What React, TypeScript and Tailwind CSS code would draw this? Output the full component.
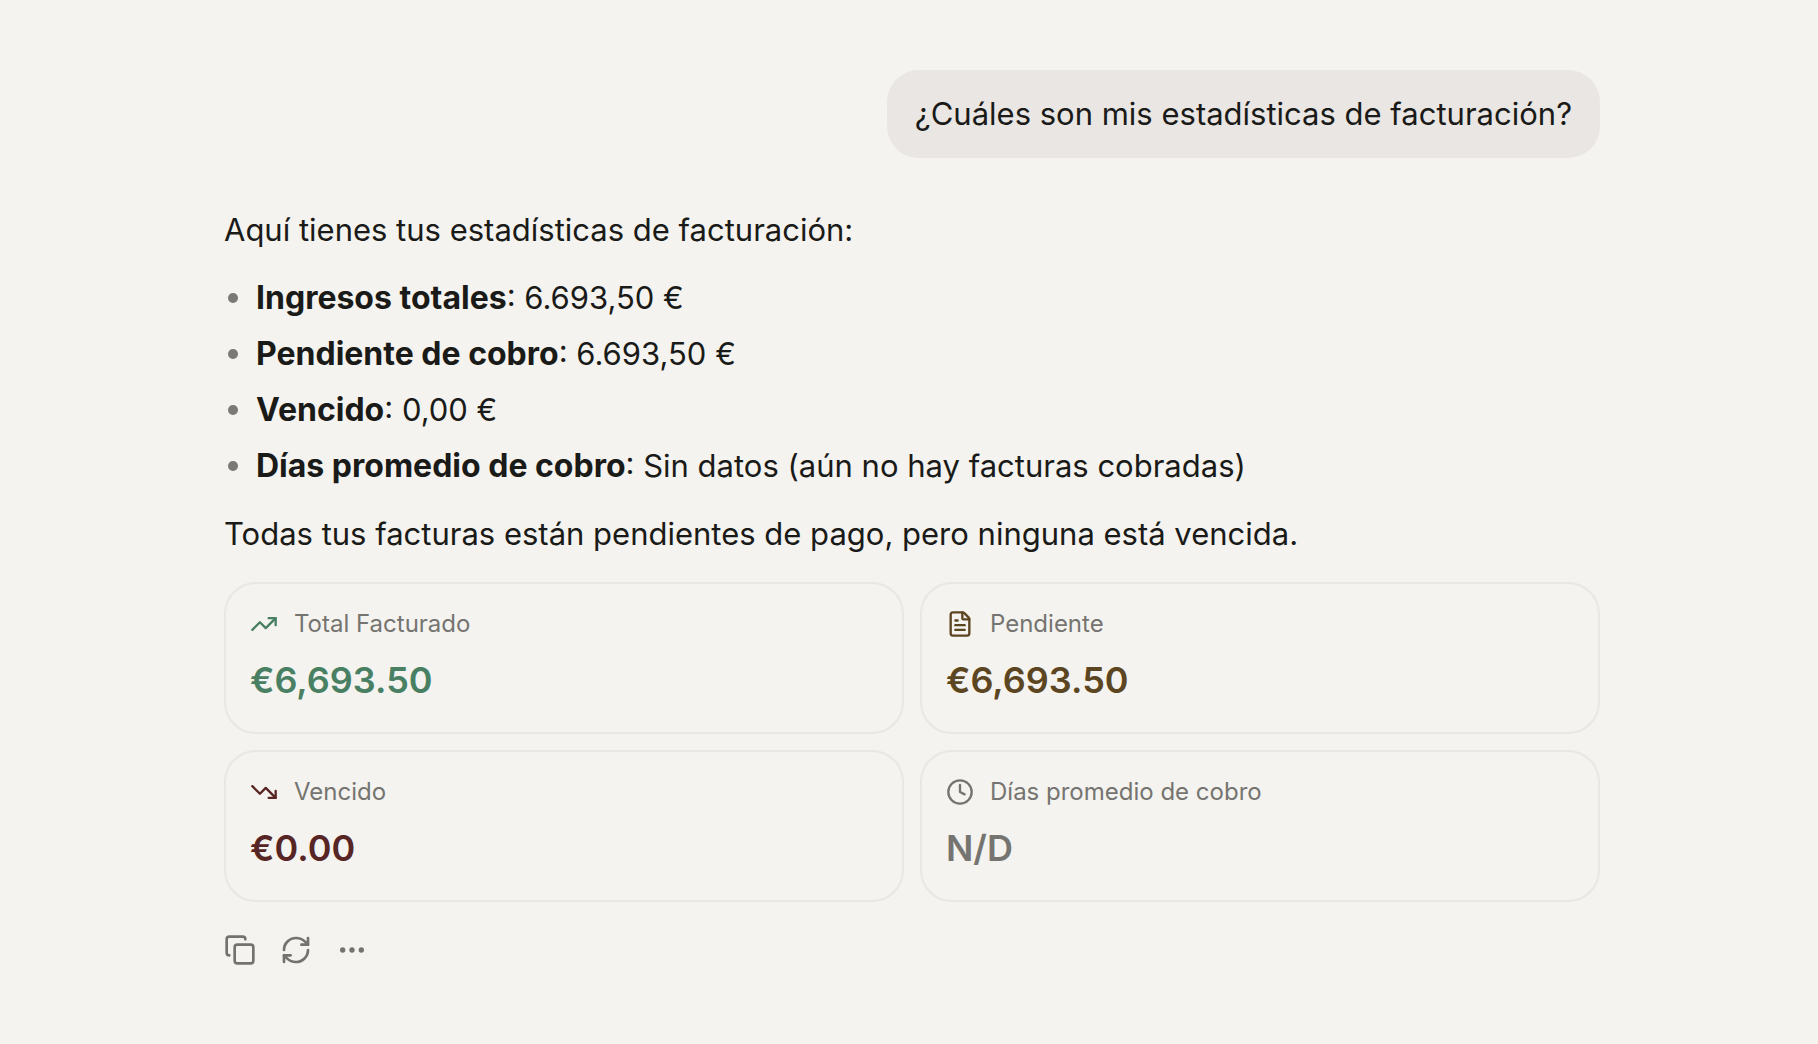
import { Clock, Copy, Ellipsis, FileText, RefreshCw, TrendingDown, TrendingUp } from "lucide-react";
import type { LucideIcon } from "lucide-react";

const items = [
  { label: "Ingresos totales", value: "6.693,50 €" },
  { label: "Pendiente de cobro", value: "6.693,50 €" },
  { label: "Vencido", value: "0,00 €" },
  { label: "Días promedio de cobro", value: "Sin datos (aún no hay facturas cobradas)" },
];

const stats: { label: string; value: string; icon: LucideIcon; color: string }[] = [
  { label: "Total Facturado", value: "€6,693.50", icon: TrendingUp, color: "text-[#498063]" },
  { label: "Pendiente", value: "€6,693.50", icon: FileText, color: "text-[#5c4521]" },
  { label: "Vencido", value: "€0.00", icon: TrendingDown, color: "text-[#582525]" },
  { label: "Días promedio de cobro", value: "N/D", icon: Clock, color: "text-[#757470]" },
];

const actions: { label: string; icon: LucideIcon }[] = [
  { label: "Copiar", icon: Copy },
  { label: "Regenerar", icon: RefreshCw },
  { label: "Más opciones", icon: Ellipsis },
];

export default function App() {
  return (
    <main className="min-h-screen bg-[#f4f3ef] pt-[70px] pr-[34px] pb-8 pl-10 font-['Inter',sans-serif] text-[31px] leading-[48px] text-[#1a1a18]">
      <div className="mx-auto flex max-w-[1376px] flex-col">
        <p className="self-end rounded-[32px] bg-[#e9e6e3] px-7 py-5">¿Cuáles son mis estadísticas de facturación?</p>
        <section className="mt-12 flex flex-col gap-5">
          <p>Aquí tienes tus estadísticas de facturación:</p>
          <ul className="flex flex-col gap-2">
            {items.map((item) => (
              <li key={item.label} className="flex items-center">
                <span className="mr-[18px] ml-1 size-[10px] rounded-full bg-[#7a7976]" />
                <span><strong className="text-[32px] font-bold">{item.label}</strong>: {item.value}</span>
              </li>
            ))}
          </ul>
          <p>Todas tus facturas están pendientes de pago, pero ninguna está vencida.</p>
        </section>
        <section className="mt-6 grid grid-cols-2 gap-4">
          {stats.map(({ label, value, icon: Icon, color }) => (
            <article key={label} className="rounded-[32px] border-2 border-[#e9e7e3] p-6">
              <div className="flex items-center gap-4">
                <Icon className={`size-7 ${color}`} />
                <h3 className="text-2xl text-[#757470]">{label}</h3>
              </div>
              <p className={`mt-3 text-[36px] leading-[56px] font-semibold ${color}`}>{value}</p>
            </article>
          ))}
        </section>
        <div className="mt-8 flex gap-6 text-[#73726e]">
          {actions.map(({ label, icon: Icon }) => (
            <button key={label} type="button" aria-label={label}><Icon className="size-8" /></button>
          ))}
        </div>
      </div>
    </main>
  );
}
